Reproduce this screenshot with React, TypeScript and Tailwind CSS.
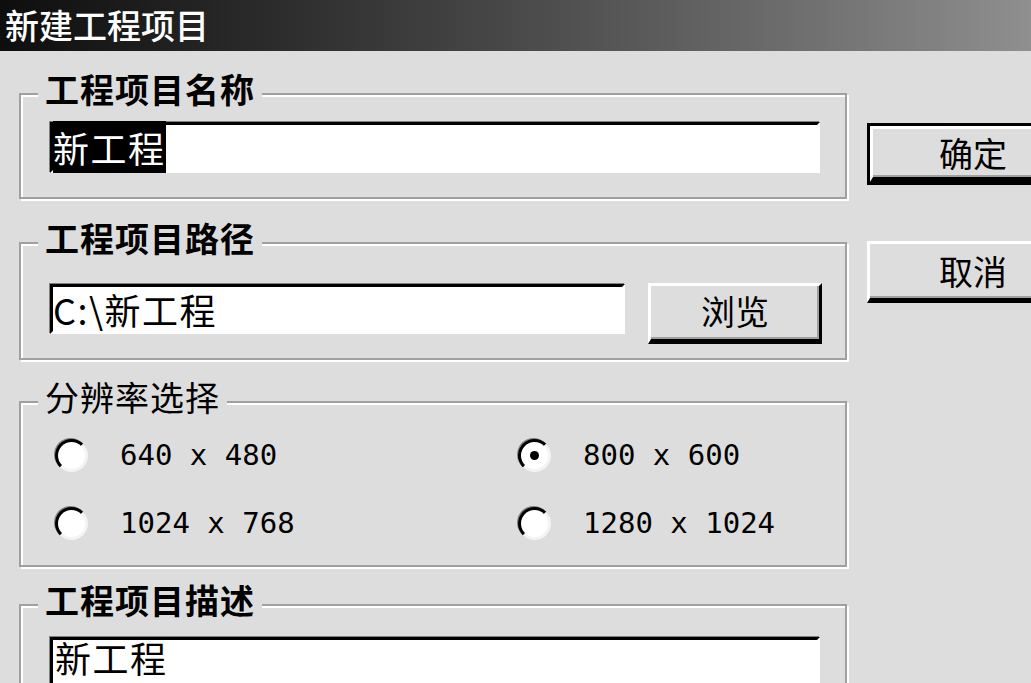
import React from 'react';

const groupBox =
  'relative border-2 border-[#a0a0a0] shadow-[inset_2px_2px_0_#ffffff,2px_2px_0_#ffffff]';
const legend =
  'absolute left-[17px] top-[-23px] bg-[#dddddd] px-[7px] text-[34px] leading-[34px] tracking-[1px] text-black';
const sunken =
  'border-t-[3px] border-l-[3px] border-t-black border-l-black border-b-[3px] border-r-[3px] border-b-white border-r-white shadow-[-1px_-1px_0_#808080] bg-white';
const raised =
  'flex items-center justify-center bg-[#dddddd] border-t-[3px] border-l-[3px] border-t-white border-l-white border-r-[3px] border-b-[5px] border-r-black border-b-black shadow-[inset_-2px_-2px_0_#a0a0a0] text-[34px] leading-[34px] text-black';

function Radio({ checked }: { checked?: boolean }) {
  return (
    <span className="flex h-[33px] w-[33px] items-center justify-center rounded-full border-[3px] border-t-black border-l-black border-r-[#f4f4f4] border-b-[#f4f4f4] bg-white shadow-[-1px_-1px_0_#808080]">
      {checked && <span className="h-[9px] w-[9px] rounded-full bg-black" />}
    </span>
  );
}

function Option({ label, checked }: { label: string; checked?: boolean }) {
  return (
    <div className="flex h-[34px] items-center gap-[32px]">
      <Radio checked={checked} />
      <span className="font-['DejaVu_Sans_Mono',monospace] text-[29px] leading-[34px] whitespace-pre text-black">
        {label}
      </span>
    </div>
  );
}

export default function App() {
  return (
    <div className="h-[683px] w-[1031px] overflow-hidden bg-[#dddddd] font-['Noto_Sans_CJK_SC',sans-serif]">
      {/* Title bar */}
      <div className="h-[51px] bg-gradient-to-r from-[#0e0e0e] to-[#8f8f8f] pl-[5px]">
        <span className="block text-[34px] leading-[49px] font-medium text-white">新建工程项目</span>
      </div>

      <div className="flex pl-[19px] pt-[42px]">
        {/* Left column */}
        <div className="flex w-[828px] shrink-0 flex-col">
          {/* Project name */}
          <div className={`${groupBox} h-[106px] pl-[29px] pt-[27px]`}>
            <span className={`${legend} font-bold`}>工程项目名称</span>
            <div className={`${sunken} h-[51px] w-[770px] pt-[2px]`}>
              <span className="bg-black text-[36px] leading-[41px] tracking-[1.5px] text-white">新工程</span>
            </div>
          </div>

          {/* Project path */}
          <div className={`${groupBox} mt-[43px] h-[118px] pl-[29px] pt-[39px]`}>
            <span className={`${legend} font-bold`}>工程项目路径</span>
            <div className="flex items-start gap-[23px]">
              <div className={`${sunken} mt-[1px] h-[50px] w-[575px] pt-[2px] text-[36px] leading-[41px] tracking-[1.5px] text-black`}>
                C:\新工程
              </div>
              <button className={`${raised} h-[61px] w-[174px] pb-[4px]`}>浏览</button>
            </div>
          </div>

          {/* Resolution */}
          <div className={`${groupBox} mt-[41px] h-[166px] pl-[34px] pt-[35px]`}>
            <span className={legend}>分辨率选择</span>
            <div className="grid grid-cols-[463px_1fr] gap-y-[34px]">
              <Option label="640 x 480" />
              <Option label="800 x 600" checked />
              <Option label="1024 x 768" />
              <Option label="1280 x 1024" />
            </div>
          </div>

          {/* Description */}
          <div className={`${groupBox} mt-[37px] h-[140px] pl-[29px] pt-[31px]`}>
            <span className={`${legend} font-bold`}>工程项目描述</span>
            <div className={`${sunken} h-[60px] w-[770px] pl-[2px]`}>
              <span className="block h-[34px] text-[36px] leading-[34px] tracking-[1.5px] text-black">新工程</span>
            </div>
          </div>
        </div>

        {/* Right column */}
        <div className="ml-[20px] flex shrink-0 flex-col pt-[30px]">
          <div className="h-[62px] w-[212px] border-[3px] border-black">
            <button className={`${raised} h-full w-full border-r-[2px] border-b-[3px]`}>确定</button>
          </div>
          <button className={`${raised} mt-[56px] h-[62px] w-[212px]`}>取消</button>
        </div>
      </div>
    </div>
  );
}
